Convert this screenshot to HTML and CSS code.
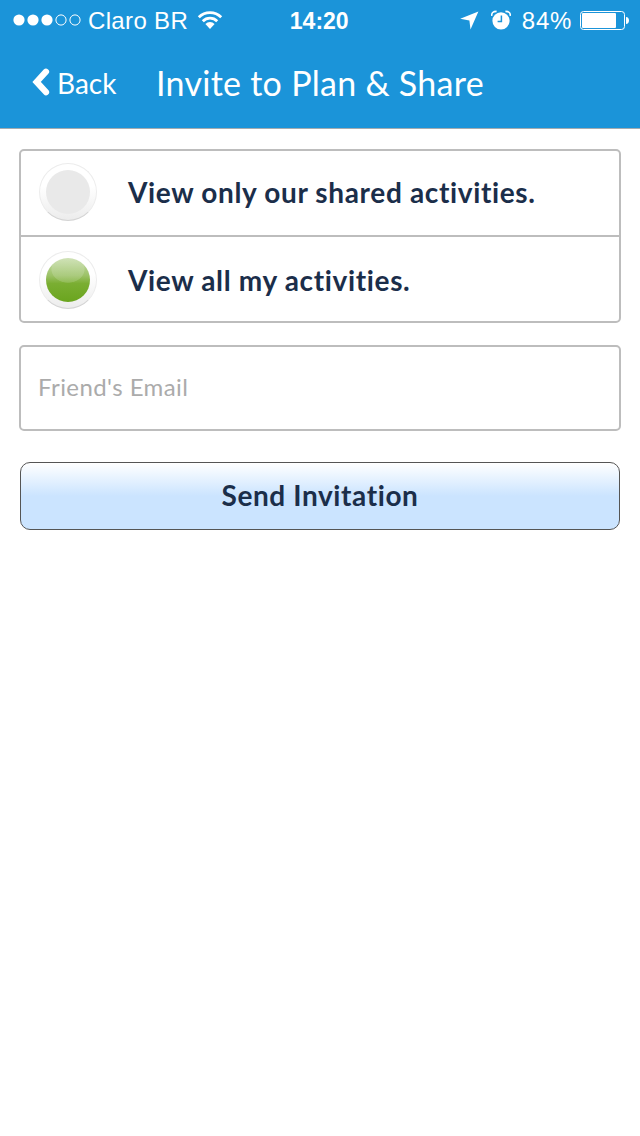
FILE: index.html
```html
<!DOCTYPE html>
<html lang="en">
<head>
    <meta charset="UTF-8">
    <meta name="viewport" content="width=device-width, initial-scale=1.0">
    <title>Invite to Plan &amp; Share</title>
    <link rel="stylesheet" href="styles.css">
</head>
<body>

<header class="header">
    <div class="status-bar">
        <div class="status-left">
            <svg class="signal" width="68" height="12" viewBox="0 0 68 12">
                <g fill="#fff">
                    <circle cx="6" cy="6" r="5.6"/>
                    <circle cx="20" cy="6" r="5.6"/>
                    <circle cx="34" cy="6" r="5.6"/>
                </g>
                <g fill="none" stroke="#fff">
                    <circle cx="48" cy="6" r="5.1"/>
                    <circle cx="62" cy="6" r="5.1"/>
                </g>
            </svg>
            <span class="carrier">Claro BR</span>
            <svg class="wifi" width="26" height="20" viewBox="0 0 26 20">
                <g fill="none" stroke="#fff" stroke-width="2.8">
                    <path d="M1.8 7.2a15.8 15.8 0 0 1 22.4 0"/>
                    <path d="M5.8 11.2a10.2 10.2 0 0 1 14.4 0"/>
                </g>
                <path d="M8.4 14a6.5 6.5 0 0 1 9.2 0L13 18.9z" fill="#fff"/>
            </svg>
        </div>
        <span class="clock">14:20</span>
        <div class="status-right">
            <svg class="location" width="19" height="19" viewBox="0 0 19 19">
                <path d="M18.4.4L10.5 18.4 9.4 9.4.2 7.8z" fill="#fff"/>
            </svg>
            <svg class="alarm" width="20" height="20" viewBox="0 0 20 20">
                <circle cx="10" cy="10.8" r="8.6" fill="#fff"/>
                <path d="M.8 5.8Q.2 1.4 5.6 1.4M19.2 5.8Q19.8 1.4 14.4 1.4" fill="none" stroke="#fff" stroke-width="1.6"/>
                <path d="M10.4 5.6v6H6.6" fill="none" stroke="#1b94d9" stroke-width="1.5"/>
            </svg>
            <span class="percent">84%</span>
            <svg class="battery" width="50" height="19" viewBox="0 0 50 19">
                <rect x=".5" y=".5" width="44" height="18" rx="3" fill="none" stroke="#fff"/>
                <rect x="2" y="2" width="34" height="15" rx="1" fill="#fff"/>
                <path d="M46 6c4 0 4 7 0 7z" fill="#fff"/>
            </svg>
        </div>
    </div>
    <nav class="nav-bar">
        <a class="back" href="#">
            <svg width="18" height="28" viewBox="0 0 18 28">
                <path d="M14 3.7L4.6 13.9 14 24.1" fill="none" stroke="#fff" stroke-width="6.2" stroke-linecap="round"/>
            </svg>
            <span>Back</span>
        </a>
        <h1 class="title">Invite to Plan &amp; Share</h1>
    </nav>
</header>

<form class="invite-form">
    <div class="options">
        <label class="option">
            <input type="radio" name="view" value="shared">
            <span>View only our shared activities.</span>
        </label>
        <label class="option">
            <input type="radio" name="view" value="all" checked>
            <span>View all my activities.</span>
        </label>
    </div>
    <input class="email" type="email" placeholder="Friend's Email">
    <button class="send-btn" type="button">Send Invitation</button>
</form>

</body>
</html>
```

FILE: styles.css
```css
* {
    box-sizing: border-box;
}
body {
    margin: 0;
    background: #fff;
    font-family: Lato, sans-serif;
    color: #1b2e4a;
}
.header {
    height: 129px;
    background: #1b94d9;
    border-bottom: 1px solid #a3abb0;
    color: #fff;
}
.status-bar {
    display: grid;
    grid-template-columns: 1fr auto 1fr;
    align-items: center;
    height: 40px;
    padding: 0 10px 0 12.5px;
    font-family: "Liberation Sans", Arial, sans-serif;
    font-size: 24px;
}
.status-left,
.status-right {
    display: flex;
    align-items: center;
}
.status-right {
    justify-content: flex-end;
}
.carrier {
    margin: 2px 9px 0 7.5px;
    letter-spacing: 0.35px;
}
.clock {
    padding: 2px 4px 0 0;
    font-size: 23px;
    font-weight: bold;
}
.alarm {
    margin: 0 11px 0 12px;
}
.percent {
    margin: 2px 8px 0 0;
    letter-spacing: 0.7px;
}
.nav-bar {
    display: flex;
    align-items: center;
    height: 88px;
    padding: 0 32px;
}
.back {
    display: flex;
    align-items: center;
    gap: 7px;
    width: 124px;
    padding-bottom: 4px;
    font-size: 28px;
    color: #fff;
    text-decoration: none;
}
.back span {
    padding-top: 2px;
}
.title {
    margin: 0;
    padding-bottom: 4px;
    font-size: 34px;
    font-weight: normal;
    letter-spacing: 0.27px;
    white-space: nowrap;
}
.invite-form {
    display: flex;
    flex-direction: column;
    padding: 20px 19px;
}
.options {
    border: 2px solid #bdbdbd;
    border-radius: 5px;
}
.option {
    display: flex;
    align-items: flex-start;
    gap: 31px;
    height: 84px;
    padding: 12px 18px 0;
    font-size: 28px;
    font-weight: bold;
    letter-spacing: 0.65px;
    line-height: 58px;
}
.option + .option {
    height: 86px;
    padding-top: 14px;
    border-top: 2px solid #bdbdbd;
}
.option input {
    appearance: none;
    flex: none;
    width: 58px;
    height: 58px;
    margin: 0;
    padding: 6px;
    border: 1px solid #ececec;
    border-bottom-color: #d4d4d4;
    border-radius: 50%;
    background: linear-gradient(#fff 40%, #ececec);
}
.option input::before {
    content: "";
    display: block;
    width: 44px;
    height: 44px;
    border-radius: 50%;
    background: #e9e9e9;
}
.option input:checked::before {
    background:
        radial-gradient(ellipse 17px 14px at 50% 11px, rgba(255, 255, 255, 0.15) 95%, transparent),
        linear-gradient(#c8ddab, #9cc267 40%, #7aae32 58%, #6aa51e);
}
.email {
    height: 86px;
    margin: 22px 0 31px;
    padding: 0 17px 4px;
    border: 2px solid #bdbdbd;
    border-radius: 5px;
    font-family: inherit;
    font-size: 24px;
    letter-spacing: 0.43px;
}
.email::placeholder {
    color: #ababab;
}
.send-btn {
    height: 68px;
    margin: 0 1px;
    padding-bottom: 3px;
    border: 1px solid #555;
    border-radius: 10px;
    background: linear-gradient(#fff, #cbe4ff 50%);
    font-family: inherit;
    font-size: 28px;
    font-weight: bold;
    letter-spacing: 0.6px;
    color: #1b2e4a;
}
```
